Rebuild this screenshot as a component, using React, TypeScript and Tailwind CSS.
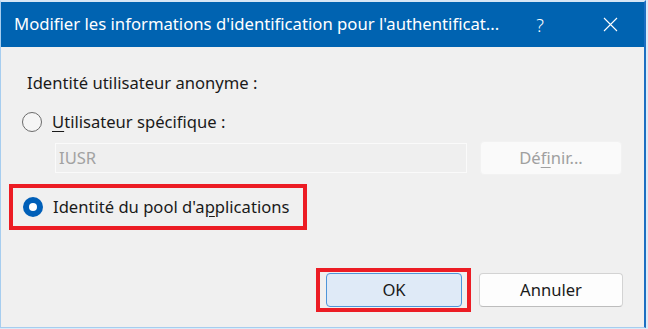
import React from "react";

const font = { fontFamily: '"Segoe UI", "Noto Sans", sans-serif' };

function Radio({ checked }: { checked?: boolean }) {
    if (checked) {
        return (
            <span className="flex h-[20px] w-[20px] shrink-0 items-center justify-center rounded-full bg-[#005fb8]">
                <span className="h-[8px] w-[8px] rounded-full bg-white" />
            </span>
        );
    }
    return <span className="h-[20px] w-[20px] shrink-0 rounded-full border-[1.5px] border-[#6b6b6b] bg-[#f5f5f5]" />;
}

export default function App() {
    return (
        <div className="h-[329px] w-[648px] bg-[#dcebf8]" style={font}>
            <div className="flex h-[328px] w-[646px] flex-col border-t-2 border-r-2 border-l border-b border-t-[#d6e6f5] border-r-[#1c6fc2] border-l-[#a6cdef] border-b-[#a6cdef] bg-[#f0f0f0]">
                <div className="flex h-[45px] shrink-0 items-center bg-[#0063b1] pl-[13px] pr-[26px] text-white">
                    <span className="text-[16.7px] leading-none">
                        Modifier les informations d'identification pour l'authentificat...
                    </span>
                    <span className="ml-auto text-[18px] font-light leading-none">?</span>
                    <svg className="ml-[59px]" width="15" height="15" viewBox="0 0 15 15">
                        <path d="M1 1 L14 14 M14 1 L1 14" stroke="white" strokeWidth="1.1" fill="none" />
                    </svg>
                </div>

                <div className="flex flex-1 flex-col pr-[21px] text-[16.6px] leading-[20px] text-[#1a1a1a]">
                    <div className="ml-[26px] mt-[26px]">Identité utilisateur anonyme :</div>

                    <div className="ml-[21px] mt-[19px] flex items-center gap-[10px]">
                        <Radio />
                        <span>
                            <span className="underline underline-offset-[3px]">U</span>tilisateur spécifique :
                        </span>
                    </div>

                    <div className="ml-[54px] mt-[9px] flex items-center gap-[13px]">
                        <div className="flex h-[30px] w-[412px] items-center border border-[#fafafa] bg-[#efefef] pl-[3px] text-[#a2a2a2]">
                            IUSR
                        </div>
                        <div className="flex h-[34px] w-[142px] items-center justify-center rounded-[4px] border border-[#f2f2f2] bg-[#fafafa] text-[#a0a0a0]">
                            <span>
                                Dé<span className="underline underline-offset-[3px]">f</span>inir...
                            </span>
                        </div>
                    </div>

                    <div className="ml-[8px] mt-[9px] flex h-[46px] w-[298px] items-center gap-[10px] border-4 border-[#ec1c24] pl-[10px]">
                        <Radio checked />
                        <span>
                            Identité du pool d'a<span className="underline underline-offset-[3px]">p</span>plications
                        </span>
                    </div>

                    <div className="mt-[38px] flex items-start justify-end gap-[8px]">
                        <div className="flex h-[44px] w-[155px] items-center border-4 border-[#ec1c24] pl-[6px]">
                            <div className="flex h-[34px] w-[136px] items-center justify-center rounded-[4px] border border-[#4f95d9] bg-[#dfeaf7]">
                                OK
                            </div>
                        </div>
                        <div className="mt-[5px] flex h-[34px] w-[144px] items-center justify-center rounded-[4px] border border-[#d3d3d3] border-b-[#bdbdbd] bg-[#fdfdfd]">
                            Annuler
                        </div>
                    </div>
                </div>
            </div>
        </div>
    );
}
